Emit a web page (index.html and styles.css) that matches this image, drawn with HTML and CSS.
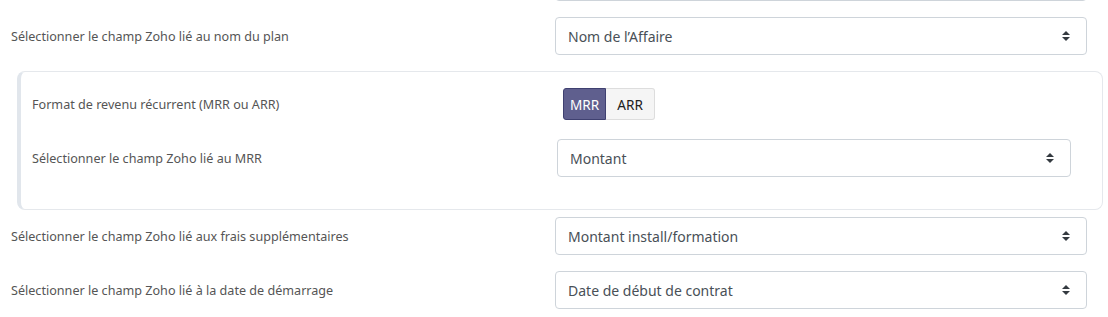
FILE: index.html
```html
<!DOCTYPE html>
<html lang="fr">
<head>
    <meta charset="UTF-8">
    <meta name="viewport" content="width=device-width, initial-scale=1.0">
    <title>Mapping Zoho</title>
    <link rel="stylesheet" href="styles.css">
</head>
<body>

<form class="mapping">
    <div class="row">
        <label class="row-label" for="prevField"></label>
        <select id="prevField" class="field-select">
            <option>Nom du contact</option>
        </select>
    </div>

    <div class="row">
        <label class="row-label" for="planField">Sélectionner le champ Zoho lié au nom du plan</label>
        <select id="planField" class="field-select">
            <option>Nom de l’Affaire</option>
        </select>
    </div>

    <div class="panel">
        <div class="panel-row">
            <span class="row-label">Format de revenu récurrent (MRR ou ARR)</span>
            <div class="toggle">
                <button type="button" class="toggle-btn active">MRR</button>
                <button type="button" class="toggle-btn">ARR</button>
            </div>
        </div>
        <div class="panel-row">
            <label class="row-label" for="mrrField">Sélectionner le champ Zoho lié au MRR</label>
            <select id="mrrField" class="field-select">
                <option>Montant</option>
            </select>
        </div>
    </div>

    <div class="row">
        <label class="row-label" for="feesField">Sélectionner le champ Zoho lié aux frais supplémentaires</label>
        <select id="feesField" class="field-select">
            <option>Montant install/formation</option>
        </select>
    </div>

    <div class="row">
        <label class="row-label" for="startField">Sélectionner le champ Zoho lié à la date de démarrage</label>
        <select id="startField" class="field-select">
            <option>Date de début de contrat</option>
        </select>
    </div>
</form>

</body>
</html>
```

FILE: styles.css
```css
body {
    font-family: 'Noto Sans', 'Open Sans', sans-serif;
    margin: 0;
    padding: 0;
    background-color: #fff;
    color: #555;
}

.mapping {
    margin-top: -37px;
    display: flex;
    flex-direction: column;
    gap: 16px;
}

.row {
    display: grid;
    grid-template-columns: 544px 532px;
    align-items: center;
    padding-left: 11px;
}

.row-label {
    font-size: 12.6px;
    color: #555;
}

.field-select {
    height: 38px;
    width: 100%;
    padding: 0 36px 0 12px;
    font-family: inherit;
    font-size: 14px;
    color: #495057;
    background-color: #fff;
    background-image: url("data:image/svg+xml,%3csvg xmlns='http://www.w3.org/2000/svg' width='8' height='10' viewBox='0 0 8 10'%3e%3cpath fill='%23343a40' d='M4 0L0 4h8zM4 10L0 6h8z'/%3e%3c/svg%3e");
    background-repeat: no-repeat;
    background-position: right 16px center;
    background-size: 8px 10px;
    border: 1px solid #ced4da;
    border-radius: 4px;
    -webkit-appearance: none;
    appearance: none;
}

.panel {
    margin-left: 17px;
    margin-bottom: -9px;
    width: 1086px;
    box-sizing: border-box;
    border: 1px solid #e5e8ec;
    border-left: 4px solid #e1e6ec;
    border-radius: 8px;
    padding: 16px 0 32px;
    display: flex;
    flex-direction: column;
    gap: 19px;
}

.panel-row {
    display: grid;
    grid-template-columns: 525px 514px;
    align-items: center;
    padding-left: 11px;
}

.toggle {
    display: flex;
    margin-left: 6px;
}

.toggle-btn {
    height: 32px;
    padding: 0 6px;
    font-family: inherit;
    font-size: 13.6px;
    border: 1px solid #ddd;
    background-color: #f5f5f5;
    color: #222;
    cursor: pointer;
}

.toggle-btn:first-child {
    border-radius: 3px 0 0 3px;
}

.toggle-btn:last-child {
    border-radius: 0 3px 3px 0;
    border-left: none;
    padding: 0 11px;
}

.toggle-btn.active {
    background-color: #5f5f8e;
    border-color: #3f4070;
    color: #fff;
}
```
